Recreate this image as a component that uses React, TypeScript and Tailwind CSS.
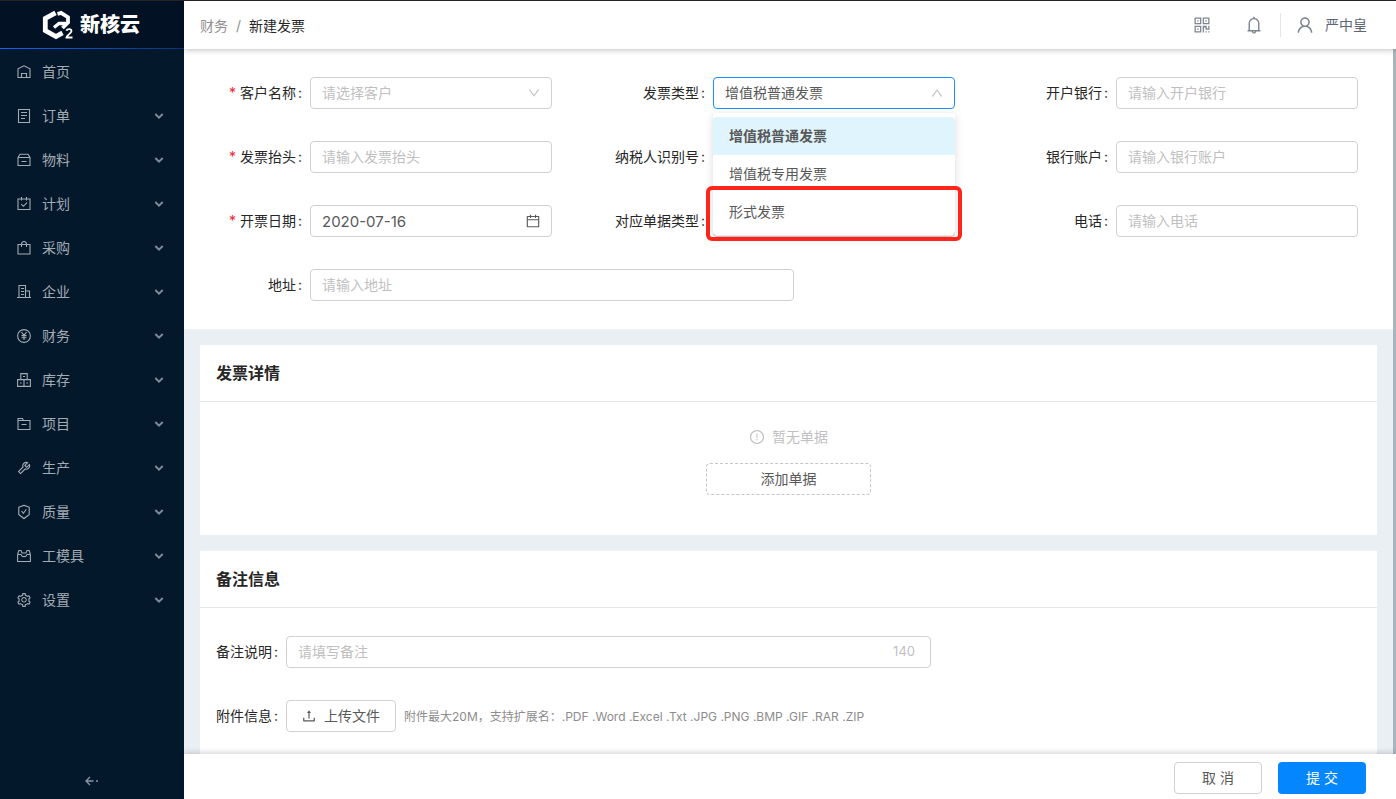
import { useState, type ReactNode } from 'react';
import {
  AiOutlineBell,
  AiOutlineCalendar,
  AiOutlineDown,
  AiOutlineExclamationCircle,
  AiOutlineQrcode,
  AiOutlineSafetyCertificate,
  AiOutlineSetting,
  AiOutlineTool,
  AiOutlineUp,
  AiOutlineUpload,
  AiOutlineUser,
} from 'react-icons/ai';

const FIELD =
  'block h-8 w-full appearance-none rounded border bg-white px-[11px] outline-none placeholder:text-[#bfbfbf]';
const INPUT = `${FIELD} border-[#d0d1d3] pb-0.5 text-sm text-[#595959]`;

const INVOICE_TYPES = ['增值税普通发票', '增值税专用发票', '形式发票'];

function LineIcon({ children }: { children: ReactNode }) {
  return (
    <svg viewBox="0 0 14 14" className="h-3.5 w-3.5" fill="none" stroke="currentColor" strokeWidth="1.1">
      {children}
    </svg>
  );
}

const MENU: { label: string; icon: ReactNode; leaf?: boolean }[] = [
  {
    label: '首页',
    leaf: true,
    icon: (
      <LineIcon>
        <path d="M1 12.5V3.8L7 .8l6 3v8.7zM4.5 12.5v-4h5v4" />
      </LineIcon>
    ),
  },
  {
    label: '订单',
    icon: (
      <LineIcon>
        <path d="M1.5.5h11v13h-11zM4 3.5h6M4 6.5h6M4 9.5h4" />
      </LineIcon>
    ),
  },
  {
    label: '物料',
    icon: (
      <LineIcon>
        <path d="M1 4.5 3 1.2h8l2 3.3v8H1zM1 4.5h12M4.5 8.5h5" />
      </LineIcon>
    ),
  },
  {
    label: '计划',
    icon: (
      <LineIcon>
        <path d="M1 2h12v10.5H1zM4.5 0v3.5M9.5 0v3.5M4.2 7.2l2.2 2.1L10 5.700" />
      </LineIcon>
    ),
  },
  {
    label: '采购',
    icon: (
      <LineIcon>
        <path d="M1 3.5h12V13H1zM4.5 6V3a2.5 2.5 0 0 1 5 0v3" />
      </LineIcon>
    ),
  },
  {
    label: '企业',
    icon: (
      <LineIcon>
        <path d="M0 12.5h14M2 12.5V.5h6.500v12M8.500 6h4v6.500M4 3.500h3M4 6.500h3M4 9.500h3" />
      </LineIcon>
    ),
  },
  {
    label: '财务',
    icon: (
      <LineIcon>
        <circle cx="7" cy="7" r="6.4" />
        <path d="M4.500 3.200 7 6.300l2.500-3.100M7 6.300V11M4.500 6.600h5M4.500 8.700h5" />
      </LineIcon>
    ),
  },
  {
    label: '库存',
    icon: (
      <LineIcon>
        <path d="M3.800.6h6.400v6H3.800zM.6 6.600H7v6.800H.6zM7 6.600h6.400v6.800H7zM6 3.500h2M3 10h1.600M9.400 10H11" />
      </LineIcon>
    ),
  },
  {
    label: '项目',
    icon: (
      <LineIcon>
        <path d="M1 12.500v-11h4.500l1 2H13v9zM1 3.500h6M4.500 7.500h5" />
      </LineIcon>
    ),
  },
  { label: '生产', icon: <AiOutlineTool size={16} className="-m-px" /> },
  { label: '质量', icon: <AiOutlineSafetyCertificate size={16} className="-m-px" /> },
  {
    label: '工模具',
    icon: (
      <LineIcon>
        <path d="M.6 5.500v7h12.800v-7M.6 5.500 1.800 1.500H4l1 2.500h4l1-2.500h2.200l1.200 4M.6 5.500H4c.6 2.800 5.400 2.800 6 0h3.400" />
      </LineIcon>
    ),
  },
  { label: '设置', icon: <AiOutlineSetting size={16} className="-m-px" /> },
];

function Logo() {
  return (
    <div className="flex h-[47px] shrink-0 items-center justify-center gap-1.5 bg-[#021224] pt-px pr-0.5">
      <svg viewBox="0 0 32 30" className="h-[30px] w-8" fill="none" stroke="#fff">
        <path d="M13.500 2.800 3.300 8.500v12L14 26.500l6.500-3.700" strokeWidth="4.800" />
        <path d="M15.500 4 19 2.900 26 7.200v5.300L20.500 18" strokeWidth="3.800" />
        <path d="M25 13.500h-8l-5 4" strokeWidth="3.400" />
        <path d="M24.500 20.800c.5-2.300 5-2.300 5 .3 0 2.200-4.500 3.800-5 6.400h6" strokeWidth="1.800" />
      </svg>
      <span className="text-xl leading-none font-black text-white">新核云</span>
    </div>
  );
}

function Sidebar() {
  return (
    <aside className="flex w-[184px] shrink-0 flex-col bg-[#04182c]">
      <Logo />
      <div className="h-px shrink-0 bg-[linear-gradient(90deg,#1262ff,#0a3573)]" />
      <nav className="flex flex-1 flex-col pt-px text-[#a3abb3]">
        {MENU.map((item) => (
          <button key={item.label} type="button" className="flex h-11 items-center pr-5 pl-[17px] text-sm">
            <span className="mr-[11px]">{item.icon}</span>
            <span className="flex-1 text-left">{item.label}</span>
            {!item.leaf && (
              <svg viewBox="0 0 10 10" className="h-2.5 w-2.5" fill="none" stroke="#7f8a95" strokeWidth="2">
                <path d="M1.300 3 5 6.700 8.700 3" />
              </svg>
            )}
          </button>
        ))}
      </nav>
      <button type="button" aria-label="收起" className="flex h-9 items-center justify-center text-[#8b949e]">
        <svg viewBox="0 0 14 10" className="h-2.5 w-3.5" fill="none" stroke="currentColor" strokeWidth="1.400">
          <path d="M5 1 1 5l4 4M1 5h7.500M11 5h2" />
        </svg>
      </button>
    </aside>
  );
}

function Header() {
  return (
    <header className="z-10 flex h-12 shrink-0 items-center justify-between bg-white pr-[29px] pl-4 shadow-[0_1px_6px_rgba(0,0,0,0.25)]">
      <nav className="flex gap-2 pt-0.5 text-sm">
        <a href="#finance" className="text-[#909090]">财务</a>
        <span className="text-[#909090]">/</span>
        <span className="text-[#262626]">新建发票</span>
      </nav>
      <div className="flex items-center text-[#7c8590]">
        <button type="button" aria-label="二维码">
          <AiOutlineQrcode size={20} />
        </button>
        <button type="button" aria-label="通知" className="ml-8">
          <AiOutlineBell size={20} />
        </button>
        <span className="mr-3.5 ml-4 h-6 w-px bg-[#e3e5e8]" />
        <button type="button" className="flex items-center gap-2.5 text-sm text-[#5d6774]">
          <AiOutlineUser size={20} className="text-[#7c8590]" />
          严中皇
        </button>
      </div>
    </header>
  );
}

interface FieldProps {
  id: string;
  label: string;
  required?: boolean;
  wide?: boolean;
  children: ReactNode;
}

function Field({ id, label, required, wide, children }: FieldProps) {
  return (
    <div className={wide ? 'col-span-2 flex' : 'flex'}>
      <label htmlFor={id} className="w-[126px] shrink-0 pr-2 text-right text-sm leading-8 text-[#262626]">
        {required && <span className="mr-1 text-[#f5222d]">*</span>}
        {label}
        <span className="ml-0.5">:</span>
      </label>
      <div className="relative w-3/5">{children}</div>
    </div>
  );
}

function InvoiceTypeSelect() {
  const [value, setValue] = useState(INVOICE_TYPES[0]);

  return (
    <>
      <select
        id="type"
        value={value}
        onChange={(e) => setValue(e.target.value)}
        className={`${FIELD} border-[#1890ff] text-sm text-[#595959]`}
      >
        {INVOICE_TYPES.map((type) => (
          <option key={type}>{type}</option>
        ))}
      </select>
      <AiOutlineUp size={14} className="pointer-events-none absolute top-[9px] right-[11px] text-[#bfbfbf]" />

      {/* Open option list */}
      <div className="absolute top-9 left-0 z-10 w-full rounded bg-white py-1 shadow-[0_2px_8px_rgba(0,0,0,0.15)]">
        {INVOICE_TYPES.map((type) => (
          <button
            key={type}
            type="button"
            onClick={() => setValue(type)}
            className={`block h-[38px] w-full px-4 text-left text-sm text-[#595959] ${
              type === value ? 'rounded-t bg-[#dff4fd] font-semibold' : ''
            }`}
          >
            {type}
          </button>
        ))}
        {/* Highlight frame around the last option */}
        <div className="pointer-events-none absolute -right-[7px] -bottom-1.5 -left-[7px] h-[55px] rounded-md border-4 border-[#ff251b]" />
      </div>
    </>
  );
}

function InvoiceForm() {
  return (
    <section className="grid grid-cols-3 gap-y-8 bg-white py-7">
      <Field id="customer" label="客户名称" required>
        <select id="customer" defaultValue="" className={`${FIELD} border-[#d0d1d3] text-sm text-[#bfbfbf]`}>
          <option value="">请选择客户</option>
        </select>
        <AiOutlineDown size={14} className="pointer-events-none absolute top-[9px] right-[11px] text-[#bfbfbf]" />
      </Field>
      <Field id="type" label="发票类型">
        <InvoiceTypeSelect />
      </Field>
      <Field id="bank" label="开户银行">
        <input id="bank" placeholder="请输入开户银行" className={INPUT} />
      </Field>

      <Field id="title" label="发票抬头" required>
        <input id="title" placeholder="请输入发票抬头" className={INPUT} />
      </Field>
      <Field id="tax" label="纳税人识别号">
        <input id="tax" className={INPUT} />
      </Field>
      <Field id="account" label="银行账户">
        <input id="account" placeholder="请输入银行账户" className={INPUT} />
      </Field>

      <Field id="date" label="开票日期" required>
        <input
          id="date"
          defaultValue="2020-07-16"
          className={`${FIELD} border-[#d0d1d3] text-[15px] text-[#595959]`}
        />
        <AiOutlineCalendar size={16} className="pointer-events-none absolute top-2 right-[11px] text-[#595959]" />
      </Field>
      <Field id="source" label="对应单据类型">
        <input id="source" className={INPUT} />
      </Field>
      <Field id="phone" label="电话">
        <input id="phone" placeholder="请输入电话" className={INPUT} />
      </Field>

      <Field id="address" label="地址" wide>
        <input id="address" placeholder="请输入地址" className={INPUT} />
      </Field>
    </section>
  );
}

function Card({ title, children }: { title: string; children: ReactNode }) {
  return (
    <section className="mx-4 mt-4 bg-white">
      <h2 className="h-[57px] border-b border-[#e5e6e8] px-4 text-base leading-[56px] font-semibold text-[#262626]">
        {title}
      </h2>
      {children}
    </section>
  );
}

export default function App() {
  return (
    <div className="flex h-screen overflow-hidden border-t border-[#262224] bg-white font-['Inter','Noto_Sans_CJK_SC',sans-serif]">
      <Sidebar />
      <div className="flex min-w-0 flex-1 flex-col">
        <Header />
        <div className="flex min-h-0 flex-1">
          <main className="min-w-0 flex-1 overflow-hidden bg-[#eaeff3]">
            <InvoiceForm />

            <Card title="发票详情">
              <div className="flex flex-col items-center pt-6 pb-10">
                <p className="flex items-center gap-[7px] text-sm leading-[22px] text-[#bfbfbf]">
                  <AiOutlineExclamationCircle size={16} />
                  暂无单据
                </p>
                <button
                  type="button"
                  className="mt-[15px] h-8 w-[165px] rounded border border-dashed border-[#c4c5c7] text-sm text-[#595959]"
                >
                  添加单据
                </button>
              </div>
            </Card>

            <Card title="备注信息">
              <div className="flex flex-col gap-8 px-4 py-7 text-sm text-[#262626]">
                <div className="flex">
                  <label htmlFor="remark" className="w-[70px] shrink-0 leading-8">
                    备注说明<span className="ml-0.5">:</span>
                  </label>
                  <div className="relative w-full max-w-[645px]">
                    <input id="remark" placeholder="请填写备注" className={INPUT} />
                    <span className="pointer-events-none absolute top-0 right-4 text-[13px] leading-[30px] text-[#bfbfbf]">
                      140
                    </span>
                  </div>
                </div>
                <div className="flex items-center">
                  <span className="w-[70px] shrink-0">
                    附件信息<span className="ml-0.5">:</span>
                  </span>
                  <button
                    type="button"
                    className="flex h-8 items-center gap-[7px] rounded border border-[#d0d1d3] pr-[15px] pl-3.5 text-[#595959]"
                  >
                    <AiOutlineUpload size={16} />
                    上传文件
                  </button>
                  <span className="ml-2 pt-0.5 text-xs text-[#8c8c8c]">
                    附件最大20M，支持扩展名：.PDF .Word .Excel .Txt .JPG .PNG .BMP .GIF .RAR .ZIP
                  </span>
                </div>
              </div>
            </Card>
          </main>
          {/* Scroll thumb */}
          <div className="w-[3px] bg-[#a9b4bc]" />
        </div>

        <footer className="z-10 flex h-[45px] shrink-0 items-start justify-end gap-4 bg-white pt-2 pr-[30px] shadow-[0_-1px_6px_rgba(0,0,0,0.2)]">
          <button type="button" className="h-8 w-[88px] rounded border border-[#d0d1d3] text-sm text-[#595959]">
            取 消
          </button>
          <button type="button" className="h-8 w-[88px] rounded bg-[#0486fe] text-sm text-white">
            提 交
          </button>
        </footer>
      </div>
    </div>
  );
}
